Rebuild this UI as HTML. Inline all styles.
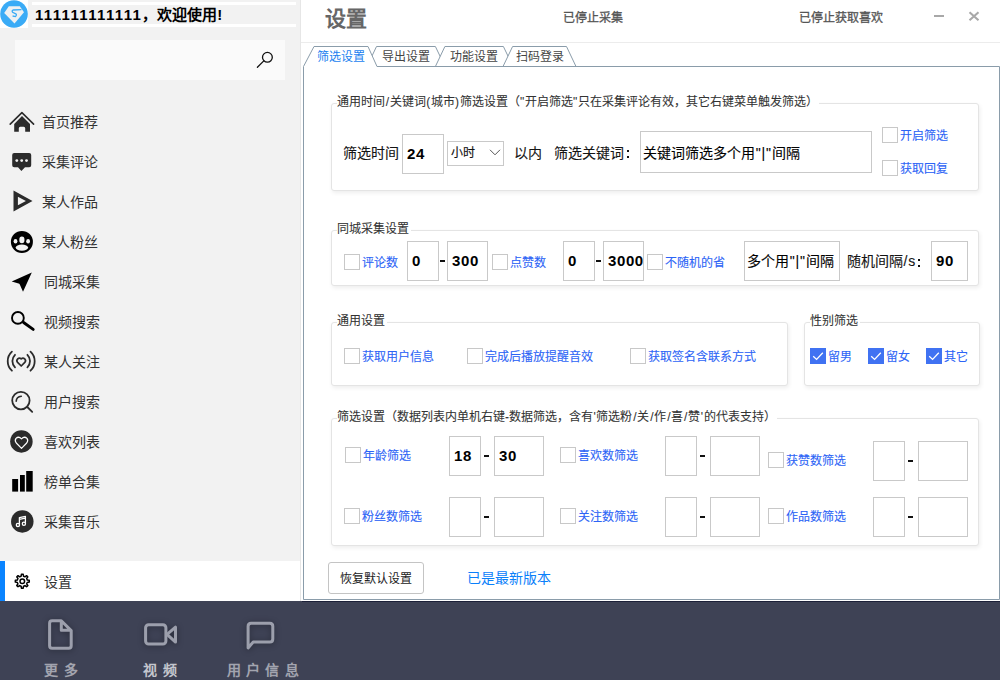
<!DOCTYPE html>
<html lang="zh-CN"><head><meta charset="utf-8">
<style>
*{margin:0;padding:0;box-sizing:border-box}
html,body{width:1000px;height:680px;overflow:hidden;background:#fff;font-family:"Liberation Sans",sans-serif;color:#333}
.a{position:absolute;white-space:nowrap}
#side{position:absolute;left:0;top:0;width:300px;height:601px;background:#f2f2f2}
.mi{position:absolute;left:0;width:300px;height:40px}
.mt{position:absolute;font-size:14px;line-height:20px;color:#333}
.ic{position:absolute;left:0;top:0}
#bot{position:absolute;left:0;top:601px;width:1000px;height:79px;background:#3e4255}
.bt{position:absolute;font-size:14px;line-height:16px;font-weight:bold;color:#a2a4af;letter-spacing:6px;margin-top:-1px}
.grp{position:absolute;border:1px solid #e4e4e4;border-radius:3px;box-shadow:1px 2px 4px rgba(0,0,0,0.07);background:#fff}
.lg{position:absolute;font-size:12px;line-height:16px;background:#fff;padding-right:1.5px;color:#333;-webkit-text-stroke:0.08px #333}
.cb{position:absolute;width:16px;height:16px;border:1px solid #c8c8c8;background:#fff}
.cl{position:absolute;font-size:12px;line-height:16px;color:#2c64f6;-webkit-text-stroke:0.1px #2c64f6}
.inp{position:absolute;border:1px solid #c9c9c9;background:#fff}
.num{position:absolute;font-size:15px;font-weight:bold;color:#000;line-height:18px;letter-spacing:0.6px}
.lbl{position:absolute;font-size:14px;line-height:18px;color:#141414;-webkit-text-stroke:0.12px #141414}
.dash{position:absolute;width:5px;height:2px;background:#111}
.chk{position:absolute;width:16px;height:16px;background:#4072f2}
</style></head><body>
<div id="side">
  <!-- logo -->
  <div class="a" style="left:0;top:0;width:28px;height:28px;background:#fff"></div>
  <svg class="a" style="left:0;top:0" width="28" height="28" viewBox="0 0 28 28">
    <circle cx="14" cy="14" r="13.8" fill="#3aabf6"/>
    <path d="M4.2 13 L8.8 6.2 L19.8 6.2 L24 12.3 L14.5 23.4 Z" fill="#eef0f2"/>
    <path d="M21.5 9.6 L13 10 Q11.6 10.4 12.6 12.3 L15.8 13.8 Q17.2 14.8 15.4 16.6 L12.6 16" fill="none" stroke="#3aabf6" stroke-width="1.3"/>
  </svg>
  <div class="a" style="left:32px;top:2px;width:264px;height:3px;background:#fff"></div>
  <div class="a" style="left:32px;top:24px;width:264px;height:3px;background:#fff"></div>
  <div class="a" style="left:35px;top:5px;font-size:15px;line-height:19px;font-weight:bold;color:#000"><span style="letter-spacing:1.35px">111111111111</span>，欢迎使用!</div>
  <!-- search -->
  <div class="a" style="left:15px;top:40px;width:270px;height:40px;background:#fafafa"></div>
  <svg class="a" style="left:250px;top:45px" width="30" height="30" viewBox="250 45 30 30">
    <circle cx="267.4" cy="57.3" r="4.9" fill="none" stroke="#111" stroke-width="1.3"/>
    <path d="M263.8 60.9 L257.4 67.3" stroke="#111" stroke-width="1.3" fill="none" stroke-linecap="round"/>
  </svg>
  <div class="mt a" style="left:42px;top:112px">首页推荐</div>
  <div class="mt a" style="left:42px;top:152px">采集评论</div>
  <div class="mt a" style="left:42px;top:192px">某人作品</div>
  <div class="mt a" style="left:42px;top:232px">某人粉丝</div>
  <div class="mt a" style="left:44px;top:272px">同城采集</div>
  <div class="mt a" style="left:44px;top:312px">视频搜索</div>
  <div class="mt a" style="left:44px;top:352px">某人关注</div>
  <div class="mt a" style="left:44px;top:392px">用户搜索</div>
  <div class="mt a" style="left:44px;top:432px">喜欢列表</div>
  <div class="mt a" style="left:44px;top:472px">榜单合集</div>
  <div class="mt a" style="left:44px;top:512px">采集音乐</div>
  <div class="a" style="left:0;top:561px;width:300px;height:40px;background:#fff"></div>
  <div class="a" style="left:0;top:561px;width:5px;height:40px;background:#0a84ff"></div>
  <div class="a" style="left:300px;top:0;width:1px;height:601px;background:#e6e6e6"></div>
  <div class="mt a" style="left:44px;top:572px">设置</div>
  <svg class="a" style="left:0;top:0" width="300" height="601" viewBox="0 0 300 601">
    <!-- home -->
    <path d="M10.2 124.1 L21.9 112.6 L33.6 124.1" fill="none" stroke="#2b2b2b" stroke-width="1.6" stroke-linecap="round" stroke-linejoin="round"/>
    <path d="M22 115.9 L30 124.1 L30 131.8 L25.2 131.8 L25.2 128.2 Q25.2 126.7 23.7 126.7 L20.3 126.7 Q18.8 126.7 18.8 128.2 L18.8 131.8 L14.2 131.8 L14.2 124.1 Z" fill="#2b2b2b"/>
    <!-- comment -->
    <path d="M14.2 153.1 L29.2 153.1 Q31.2 153.1 31.2 155.1 L31.2 165.2 Q31.2 167.2 29.2 167.2 L25 167.2 L21.4 170.9 L18 167.2 L14.2 167.2 Q12.2 167.2 12.2 165.2 L12.2 155.1 Q12.2 153.1 14.2 153.1 Z" fill="#2b2b2b"/>
    <circle cx="16.8" cy="160.6" r="1.4" fill="#f2f2f2"/><circle cx="21.7" cy="160.6" r="1.4" fill="#f2f2f2"/><circle cx="26.5" cy="160.6" r="1.4" fill="#f2f2f2"/>
    <!-- play -->
    <path d="M13.5 190.4 L32.5 201 L13.5 211.6 Z M17.9 196.8 L17.9 205.2 L25.9 201 Z" fill="#2b2b2b" fill-rule="evenodd"/>
    <!-- paw -->
    <circle cx="21.9" cy="241.9" r="11" fill="#000"/>
    <ellipse cx="21.9" cy="239.9" rx="2.6" ry="3.3" fill="#f2f2f2"/>
    <ellipse cx="15.5" cy="241.2" rx="1.9" ry="2.3" fill="#f2f2f2"/>
    <ellipse cx="28.1" cy="241.2" rx="1.9" ry="2.3" fill="#f2f2f2"/>
    <ellipse cx="21.9" cy="247.6" rx="6.2" ry="3.1" fill="#f2f2f2"/>
    <!-- nav arrow -->
    <path d="M11.7 281.4 L31.8 272.4 L23 291.8 L19.8 284.6 Q19.4 283.8 18.6 283.6 Z" fill="#000"/>
    <!-- magnifier -->
    <circle cx="17.9" cy="317.9" r="5.9" fill="none" stroke="#000" stroke-width="1.9"/>
    <path d="M23.6 322.5 L33.2 329.4" stroke="#000" stroke-width="2.9" stroke-linecap="round"/>
    <!-- follow -->
    <path d="M11.9 351.7 A12.9 12.9 0 0 0 11.9 370.7 M15 354.8 A8.9 8.9 0 0 0 15 367.4 M30.5 351.7 A12.9 12.9 0 0 1 30.5 370.7 M27.4 354.8 A8.9 8.9 0 0 1 27.4 367.4" fill="none" stroke="#2b2b2b" stroke-width="1.8" stroke-linecap="round"/>
    <path d="M21.2 366 L17.6 362.4 A2.55 2.55 0 0 1 21.2 358.8 A2.55 2.55 0 0 1 24.8 362.4 Z" fill="none" stroke="#2b2b2b" stroke-width="1.7" stroke-linejoin="round"/>
    <!-- user search -->
    <circle cx="20.9" cy="400.6" r="8.7" fill="none" stroke="#2b2b2b" stroke-width="1.8"/>
    <path d="M16.2 401.2 Q16.4 396.6 21.3 396.2" fill="none" stroke="#2b2b2b" stroke-width="1.6" stroke-linecap="round"/>
    <path d="M27.3 407 L32.2 411.8" stroke="#2b2b2b" stroke-width="1.8" stroke-linecap="round"/>
    <!-- heart circle -->
    <circle cx="21.4" cy="441.4" r="11.25" fill="#2b2b2b"/>
    <path d="M21.5 448.3 L16.3 443 Q14.4 440.6 16 438.4 Q18.6 435.9 21.5 438.8 Q24.4 435.9 27 438.4 Q28.6 440.6 26.7 443 Z" fill="none" stroke="#fff" stroke-width="1.2" stroke-linejoin="round"/>
    <!-- bars -->
    <rect x="12.2" y="479" width="5.9" height="12.6" fill="#000"/>
    <rect x="20" y="475" width="4.8" height="16.6" fill="#000"/>
    <rect x="26.2" y="471" width="6.5" height="20.6" fill="#000"/>
    <!-- music -->
    <circle cx="22.3" cy="521.4" r="11.25" fill="#2b2b2b"/>
    <path d="M19.4 524.6 L19.4 517.6 L25.4 516.4 L25.4 523.4 M19.4 519.4 L25.4 518.2" fill="none" stroke="#fff" stroke-width="1.3" stroke-linejoin="round"/>
    <circle cx="17.9" cy="524.9" r="1.6" fill="#2b2b2b" stroke="#fff" stroke-width="1.3"/>
    <circle cx="23.9" cy="523.7" r="1.6" fill="#2b2b2b" stroke="#fff" stroke-width="1.3"/>
    <!-- gear -->
    <g transform="translate(22.3 581.2)" fill="none" stroke="#000" stroke-width="1.5" stroke-linejoin="round">
      <path d="M-1.19 -4.96 L-0.88 -6.94 A7.0 7.0 0 0 1 0.88 -6.94 L1.19 -4.96 A5.1 5.1 0 0 1 2.66 -4.35 L4.29 -5.53 A7.0 7.0 0 0 1 5.53 -4.29 L4.35 -2.66 A5.1 5.1 0 0 1 4.96 -1.19 L6.94 -0.88 A7.0 7.0 0 0 1 6.94 0.88 L4.96 1.19 A5.1 5.1 0 0 1 4.35 2.66 L5.53 4.29 A7.0 7.0 0 0 1 4.29 5.53 L2.66 4.35 A5.1 5.1 0 0 1 1.19 4.96 L0.88 6.94 A7.0 7.0 0 0 1 -0.88 6.94 L-1.19 4.96 A5.1 5.1 0 0 1 -2.66 4.35 L-4.29 5.53 A7.0 7.0 0 0 1 -5.53 4.29 L-4.35 2.66 A5.1 5.1 0 0 1 -4.96 1.19 L-6.94 0.88 A7.0 7.0 0 0 1 -6.94 -0.88 L-4.96 -1.19 A5.1 5.1 0 0 1 -4.35 -2.66 L-5.53 -4.29 A7.0 7.0 0 0 1 -4.29 -5.53 L-2.66 -4.35 A5.1 5.1 0 0 1 -1.19 -4.96 Z"/>
      <circle r="2.3"/>
    </g>
  </svg>
</div>
<div id="main">
  <div class="a" style="left:325px;top:7px;font-size:21px;line-height:24px;font-weight:bold;color:#666">设置</div>
  <div class="a" style="left:563px;top:10px;font-size:12px;line-height:16px;color:#555;-webkit-text-stroke:0.3px #555">已停止采集</div>
  <div class="a" style="left:799px;top:10px;font-size:12px;line-height:16px;color:#555;-webkit-text-stroke:0.3px #555">已停止获取喜欢</div>
  <div class="a" style="left:934px;top:14.5px;width:10px;height:2.5px;background:#a8a8a8"></div>
  <svg class="a" style="left:965px;top:8px" width="18" height="18" viewBox="965 8 18 18"><path d="M969.5 12.3 L978.5 20.3 M978.5 12.3 L969.5 20.3" stroke="#a8a8a8" stroke-width="2.1"/></svg>
  <div class="a" style="left:301px;top:42px;width:699px;height:1px;background:#ececec"></div>
  <svg class="a" style="left:300px;top:40px" width="700" height="561" viewBox="300 40 700 561">
    <g fill="#fff" stroke="#8a9caa" stroke-width="1">
      <path d="M367 66.5 L376.5 46.5 L435.4 46.5 L445 66.5 Z"/>
      <path d="M435.4 66.5 L444.9 46.5 L503.4 46.5 L513 66.5 Z"/>
      <path d="M503 66.5 L512.6 46.5 L566.5 46.5 L576 66.5 Z"/>
    </g>
    <path d="M303.5 599.5 L303.5 66.5 L314 46.5 L368 46.5 L377 66.5 L999.5 66.5 L999.5 599.5 Z" fill="#fff" stroke="#8a9caa" stroke-width="1"/>
  </svg>
  <div class="a" style="left:317px;top:49px;font-size:12px;line-height:16px;color:#1a7ff0">筛选设置</div>
  <div class="a" style="left:382px;top:49px;font-size:12px;line-height:16px;color:#444">导出设置</div>
  <div class="a" style="left:450px;top:49px;font-size:12px;line-height:16px;color:#444">功能设置</div>
  <div class="a" style="left:516px;top:49px;font-size:12px;line-height:16px;color:#444">扫码登录</div>

  <div class="grp" style="left:331px;top:103px;width:648px;height:88px"></div>
  <div class="lg" style="left:337px;top:94px">通用时间<span style="margin:0 0.8px">/</span>关键词<span style="margin:0 0.4px">(</span>城市<span style="margin:0 0.4px">)</span>筛选设置（<span style="margin:0 0.4px">"</span>开启筛选<span style="margin:0 0.4px">"</span>只在采集评论有效，其它右键菜单触发筛选）</div>
  <div class="lbl a" style="left:343px;top:144px">筛选时间</div>
  <div class="inp" style="left:402px;top:134px;width:42px;height:40px"></div>
  <div class="num a" style="left:407px;top:145px">24</div>
  <div class="inp" style="left:447px;top:141px;width:57px;height:25px"></div>
  <div class="a" style="left:451px;top:145px;font-size:12px;line-height:16px;color:#111;-webkit-text-stroke:0.15px #111">小时</div>
  <svg class="a" style="left:488px;top:147px" width="14" height="10" viewBox="0 0 14 10"><path d="M2 2.8 L7 7.8 L12 2.8" fill="none" stroke="#555" stroke-width="1"/></svg>
  <div class="lbl a" style="left:514px;top:144px">以内</div>
  <div class="lbl a" style="left:554px;top:144px">筛选关键词</div>
  <div class="a" style="left:627px;top:150px;width:2px;height:2px;background:#111"></div><div class="a" style="left:627px;top:156px;width:2px;height:2px;background:#111"></div>
  <div class="inp" style="left:640px;top:131px;width:232px;height:42px"></div>
  <div class="lbl a" style="left:643px;top:144px;color:#000">关键词筛选多个用<span style="letter-spacing:0.8px;margin-left:0.8px">"|"</span>间隔</div>
  <div class="cb" style="left:882px;top:127px"></div>
  <div class="cl a" style="left:900px;top:128px">开启筛选</div>
  <div class="cb" style="left:882px;top:160px"></div>
  <div class="cl a" style="left:900px;top:161px">获取回复</div>

  <div class="grp" style="left:331px;top:230px;width:648px;height:56px"></div>
  <div class="lg" style="left:337px;top:221px">同城采集设置</div>
  <div class="cb" style="left:344px;top:254px"></div>
  <div class="cl a" style="left:362px;top:255px">评论数</div>
  <div class="inp" style="left:407px;top:241px;width:32px;height:40px"></div>
  <div class="num a" style="left:412px;top:252px">0</div>
  <div class="dash" style="left:440px;top:260px"></div>
  <div class="inp" style="left:447px;top:241px;width:41px;height:40px"></div>
  <div class="num a" style="left:452px;top:252px">300</div>
  <div class="cb" style="left:492px;top:254px"></div>
  <div class="cl a" style="left:510px;top:255px">点赞数</div>
  <div class="inp" style="left:563px;top:241px;width:32px;height:40px"></div>
  <div class="num a" style="left:568px;top:252px">0</div>
  <div class="dash" style="left:596px;top:260px"></div>
  <div class="inp" style="left:603px;top:241px;width:41px;height:40px;overflow:hidden"><div class="num a" style="left:4px;top:10px">3000</div></div>
  <div class="cb" style="left:647px;top:254px"></div>
  <div class="cl a" style="left:665px;top:255px">不随机的省</div>
  <div class="inp" style="left:744px;top:241px;width:96px;height:40px"></div>
  <div class="lbl a" style="left:747px;top:252px;color:#000">多个用<span style="letter-spacing:0.8px;margin-left:0.8px">"|"</span>间隔</div>
  <div class="lbl a" style="left:847px;top:252px">随机间隔<span style="letter-spacing:0.8px;margin-left:0.5px">/s</span></div>
  <div class="a" style="left:918px;top:258.5px;width:2px;height:2px;background:#111"></div><div class="a" style="left:918px;top:264.5px;width:2px;height:2px;background:#111"></div>
  <div class="inp" style="left:931px;top:241px;width:37px;height:40px"></div>
  <div class="num a" style="left:936px;top:252px">90</div>

  <div class="grp" style="left:331px;top:322px;width:457px;height:64px"></div>
  <div class="lg" style="left:337px;top:313px">通用设置</div>
  <div class="cb" style="left:344px;top:348px"></div>
  <div class="cl a" style="left:362px;top:349px">获取用户信息</div>
  <div class="cb" style="left:467px;top:348px"></div>
  <div class="cl a" style="left:485px;top:349px">完成后播放提醒音效</div>
  <div class="cb" style="left:630px;top:348px"></div>
  <div class="cl a" style="left:648px;top:349px">获取签名含联系方式</div>
  <div class="grp" style="left:804px;top:322px;width:176px;height:64px"></div>
  <div class="lg" style="left:810px;top:313px">性别筛选</div>
  <div class="chk" style="left:810px;top:348px"><svg width="16" height="16" viewBox="0 0 16 16"><path d="M3.2 8.2 L6.6 11.4 L12.8 4.8" fill="none" stroke="#fff" stroke-width="1.3"/></svg></div>
  <div class="cl a" style="left:828px;top:349px">留男</div>
  <div class="chk" style="left:868px;top:348px"><svg width="16" height="16" viewBox="0 0 16 16"><path d="M3.2 8.2 L6.6 11.4 L12.8 4.8" fill="none" stroke="#fff" stroke-width="1.3"/></svg></div>
  <div class="cl a" style="left:886px;top:349px">留女</div>
  <div class="chk" style="left:926px;top:348px"><svg width="16" height="16" viewBox="0 0 16 16"><path d="M3.2 8.2 L6.6 11.4 L12.8 4.8" fill="none" stroke="#fff" stroke-width="1.3"/></svg></div>
  <div class="cl a" style="left:944px;top:349px">其它</div>

  <div class="grp" style="left:331px;top:418px;width:648px;height:128px"></div>
  <div class="lg" style="left:337px;top:409px">筛选设置（数据列表内单机右键-数据筛选，含有<span style="margin:0 0.6px">'</span>筛选粉<span style="margin:0 0.8px">/</span>关<span style="margin:0 0.8px">/</span>作<span style="margin:0 0.8px">/</span>喜<span style="margin:0 0.8px">/</span>赞<span style="margin:0 0.6px">'</span>的代表支持）</div>
  <div class="cb" style="left:345px;top:447px"></div>
  <div class="cl a" style="left:363px;top:448px">年龄筛选</div>
  <div class="inp" style="left:449px;top:436px;width:32px;height:40px"></div>
  <div class="dash" style="left:484px;top:455px"></div>
  <div class="inp" style="left:494px;top:436px;width:50px;height:40px"></div>
  <div class="num a" style="left:454px;top:447px">18</div>
  <div class="num a" style="left:499px;top:447px">30</div>
  <div class="cb" style="left:560px;top:447px"></div>
  <div class="cl a" style="left:578px;top:448px">喜欢数筛选</div>
  <div class="inp" style="left:665px;top:436px;width:32px;height:40px"></div>
  <div class="dash" style="left:700px;top:455px"></div>
  <div class="inp" style="left:710px;top:436px;width:50px;height:40px"></div>
  <div class="cb" style="left:768px;top:452px"></div>
  <div class="cl a" style="left:786px;top:453px">获赞数筛选</div>
  <div class="inp" style="left:873px;top:441px;width:32px;height:40px"></div>
  <div class="dash" style="left:908px;top:460px"></div>
  <div class="inp" style="left:918px;top:441px;width:50px;height:40px"></div>
  <div class="cb" style="left:344px;top:508px"></div>
  <div class="cl a" style="left:362px;top:509px">粉丝数筛选</div>
  <div class="inp" style="left:449px;top:497px;width:32px;height:40px"></div>
  <div class="dash" style="left:484px;top:516px"></div>
  <div class="inp" style="left:494px;top:497px;width:50px;height:40px"></div>
  <div class="cb" style="left:560px;top:508px"></div>
  <div class="cl a" style="left:578px;top:509px">关注数筛选</div>
  <div class="inp" style="left:665px;top:497px;width:32px;height:40px"></div>
  <div class="dash" style="left:700px;top:516px"></div>
  <div class="inp" style="left:710px;top:497px;width:50px;height:40px"></div>
  <div class="cb" style="left:768px;top:508px"></div>
  <div class="cl a" style="left:786px;top:509px">作品数筛选</div>
  <div class="inp" style="left:873px;top:497px;width:32px;height:40px"></div>
  <div class="dash" style="left:908px;top:516px"></div>
  <div class="inp" style="left:918px;top:497px;width:50px;height:40px"></div>

  <div class="a" style="left:328px;top:562px;width:96px;height:32px;border:1px solid #c4c4c4;border-radius:3px;background:#fff"></div>
  <div class="a" style="left:340px;top:571px;font-size:12px;line-height:16px;color:#222">恢复默认设置</div>
  <div class="a" style="left:467px;top:569px;font-size:14px;line-height:18px;color:#0a80fa">已是最新版本</div>
</div>

<div id="bot">
  <svg class="a" style="left:0;top:0;filter:drop-shadow(0 1px 3px rgba(0,0,0,0.35))" width="320" height="79" viewBox="0 601 320 79">
    <g fill="none" stroke="#9c9fac" stroke-width="3" stroke-linejoin="round">
      <path d="M49.6 623.2 Q49.6 620.7 52.1 620.7 L61.3 620.7 L71.2 630.6 L71.2 645.7 Q71.2 648.2 68.7 648.2 L52.1 648.2 Q49.6 648.2 49.6 645.7 Z M61.3 620.7 L61.3 630.2 L71.2 630.2"/>
      <rect x="145.6" y="624.7" width="20.3" height="19.3" rx="3"/>
      <path d="M167 634.3 L175.5 627.2 L175.5 642.1 Z"/>
      <path d="M248.1 647.9 L248.1 626.2 Q248.1 623.2 251.1 623.2 L269.8 623.2 Q272.8 623.2 272.8 626.2 L272.8 639.1 Q272.8 642.1 269.8 642.1 L253.2 642.1 Z"/>
    </g>
  </svg>
  <div class="a" style="left:302px;top:0;width:698px;height:1px;background:#1c2038"></div>
  <div class="bt a" style="left:44px;top:62px">更多</div>
  <div class="bt a" style="left:143px;top:62px;color:#c4c6ce">视频</div>
  <div class="bt a" style="left:227px;top:62px;letter-spacing:5.2px">用户信息</div>
</div>
</body></html>
